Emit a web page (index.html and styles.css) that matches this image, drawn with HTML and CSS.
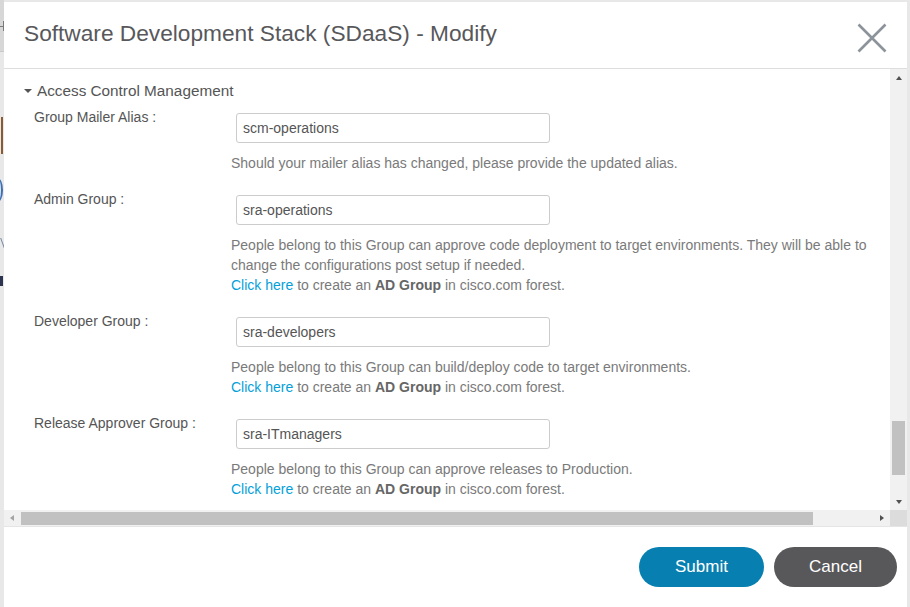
FILE: index.html
```html
<!DOCTYPE html>
<html>
<head>
<meta charset="utf-8">
<title>SDaaS - Modify</title>
<link rel="stylesheet" href="styles.css">
</head>
<body>
<div class="backdrop" aria-hidden="true">
  <div class="bd-top"><div class="bd-plus"></div></div>
  <div class="bd-strip">
    <div class="bd-f"></div>
    <div class="bd-paren"></div>
    <div class="bd-v"></div>
    <div class="bd-i"></div>
  </div>
</div>

<div class="modal">
  <div class="modal-header">
    <h1 class="modal-title">Software Development Stack (SDaaS) - Modify</h1>
    <button class="close" aria-label="Close">
      <svg width="30" height="30" viewBox="0 0 30 30"><path d="M1.5 1.5 L28.5 28.5 M28.5 1.5 L1.5 28.5" stroke="#8c939a" stroke-width="2.6" fill="none"/></svg>
    </button>
  </div>

  <div class="modal-scroll">
    <div class="scroll-main">
      <div class="viewport">
        <div class="section-title"><span class="caret"></span>Access Control Management</div>

        <div class="field-row">
          <label class="field-label">Group Mailer Alias :</label>
          <div class="field-body">
            <input class="field-input" type="text" value="scm-operations">
            <div class="help">Should your mailer alias has changed, please provide the updated alias.</div>
          </div>
        </div>

        <div class="field-row">
          <label class="field-label">Admin Group :</label>
          <div class="field-body">
            <input class="field-input" type="text" value="sra-operations">
            <div class="help">People belong to this Group can approve code deployment to target environments. They will be able to change the configurations post setup if needed.<br><a class="link" href="#">Click here</a> to create an <b>AD Group</b> in cisco.com forest.</div>
          </div>
        </div>

        <div class="field-row">
          <label class="field-label">Developer Group :</label>
          <div class="field-body">
            <input class="field-input" type="text" value="sra-developers">
            <div class="help">People belong to this Group can build/deploy code to target environments.<br><a class="link" href="#">Click here</a> to create an <b>AD Group</b> in cisco.com forest.</div>
          </div>
        </div>

        <div class="field-row">
          <label class="field-label">Release Approver Group :</label>
          <div class="field-body">
            <input class="field-input" type="text" value="sra-ITmanagers">
            <div class="help">People belong to this Group can approve releases to Production.<br><a class="link" href="#">Click here</a> to create an <b>AD Group</b> in cisco.com forest.</div>
          </div>
        </div>
      </div>

      <div class="vscroll">
        <div class="sb-btn"><span class="arr arr-up"></span></div>
        <div class="vtrack"><div class="vthumb"></div></div>
        <div class="sb-btn"><span class="arr arr-down"></span></div>
      </div>
    </div>

    <div class="hscroll-row">
      <div class="hscroll">
        <div class="sb-btn-h"><span class="arr arr-left"></span></div>
        <div class="htrack"><div class="hthumb"></div></div>
        <div class="sb-btn-h"><span class="arr arr-right"></span></div>
      </div>
      <div class="corner"></div>
    </div>
  </div>

  <div class="modal-footer">
    <button class="btn btn-primary">Submit</button>
    <button class="btn btn-secondary">Cancel</button>
  </div>
</div>
</body>
</html>
```

FILE: styles.css
```css
* { box-sizing: border-box; }
html, body { margin: 0; padding: 0; }
body {
  width: 910px;
  height: 607px;
  overflow: hidden;
  position: relative;
  background: #e8e8e8;
  font-family: "Liberation Sans", Arial, sans-serif;
}

/* page behind the dialog (only a 4px sliver shows) */
.backdrop { display: flex; flex-direction: column; width: 4px; overflow: hidden; }
.bd-top {
  height: 52px;
  background: #d7d7d7;
  border-bottom: 1px solid #c9c9c9;
  padding-top: 21px;
}
.bd-plus {
  position: relative;
  width: 4px;
  height: 10px;
  border-right: 1px solid #7a7a7a;
}
.bd-plus::after {
  content: "";
  position: absolute;
  left: 0;
  top: 5px;
  width: 4px;
  height: 1px;
  background: #7a7a7a;
}
.bd-strip { display: flex; flex-direction: column; }
.bd-f { margin: 65px 0 0 1px; width: 2px; height: 37px; background: #8a5a32; }
.bd-paren {
  margin: 24px 0 0 -8px;
  width: 11px;
  height: 24px;
  border-right: 2px solid #3b6fb8;
  border-radius: 50%;
}
.bd-v { margin: 36px 0 0 0; width: 3px; height: 10px; border-right: 1px solid #7386a0; transform: skewX(20deg); }
.bd-i { margin: 28px 0 0 0; width: 3px; height: 10px; background: #2c3550; }

/* dialog */
.modal {
  position: absolute;
  left: 4px;
  top: 2px;
  width: 903px;
  height: 620px;
  background: #fff;
  display: flex;
  flex-direction: column;
}
.modal-header {
  height: 67px;
  flex: none;
  border-bottom: 1px solid #dedede;
  display: flex;
  align-items: flex-start;
  justify-content: space-between;
  padding: 18px 20px 0 20px;
}
.modal-title {
  margin: 0;
  font-size: 22.7px;
  line-height: 26px;
  font-weight: normal;
  color: #58585b;
}
.close {
  margin-top: 3px;
  padding: 0;
  border: 0;
  background: none;
  width: 30px;
  height: 30px;
  display: block;
}
.close svg { display: block; }

.modal-scroll { flex: none; display: flex; flex-direction: column; }
.scroll-main { height: 441px; display: flex; }
.viewport {
  flex: 1;
  overflow: hidden;
  padding: 12px 0 0 20px;
  color: #555;
}
.section-title {
  font-size: 15.3px;
  line-height: 20px;
  color: #555;
  display: flex;
  align-items: center;
  margin-bottom: 6px;
}
.caret {
  width: 0; height: 0;
  border-left: 4px solid transparent;
  border-right: 4px solid transparent;
  border-top: 4.5px solid #555;
  margin-right: 5px;
  margin-top: -1px;
}
.field-row {
  display: grid;
  grid-template-columns: 197px 680px;
  margin-bottom: 16px;
  margin-left: 10px;
}
.field-label {
  font-size: 14px;
  line-height: 20px;
  color: #555;
}
.field-body { display: flex; flex-direction: column; align-items: flex-start; }
.field-input {
  margin: 6px 0 0 5px;
  width: 314px;
  height: 30px;
  border: 1px solid #cccccc;
  border-radius: 3px;
  padding: 0 6px;
  font-family: "Liberation Sans", Arial, sans-serif;
  font-size: 14px;
  color: #555;
  background: #fff;
  outline: none;
}
.help {
  margin-top: 10px;
  width: 660px;
  font-size: 14px;
  line-height: 20px;
  color: #7a7a7a;
}
.help b { color: #666; }
.link { color: #049fd9; text-decoration: none; }

/* fake scrollbars */
.vscroll {
  width: 17px;
  flex: none;
  background: #f1f1f1;
  display: flex;
  flex-direction: column;
}
.sb-btn { height: 17px; display: flex; align-items: center; justify-content: center; flex: none; }
.vtrack { flex: 1; padding: 0 2px; }
.vthumb { margin-top: 335px; height: 54px; background: #c1c1c1; }

.hscroll-row { height: 16px; display: flex; }
.hscroll { flex: 1; background: #f1f1f1; display: flex; }
.sb-btn-h { width: 16px; display: flex; align-items: center; justify-content: center; flex: none; }
.htrack { flex: 1; padding: 2px 0 1px 1px; }
.hthumb { width: 792px; height: 100%; background: #c1c1c1; }
.corner { width: 17px; background: #dcdcdc; }

.arr { width: 0; height: 0; display: block; }
.arr-up { border-left: 3.5px solid transparent; border-right: 3.5px solid transparent; border-bottom: 4px solid #505050; }
.arr-down { border-left: 3.5px solid transparent; border-right: 3.5px solid transparent; border-top: 4px solid #505050; }
.arr-left { border-top: 3.5px solid transparent; border-bottom: 3.5px solid transparent; border-right: 4px solid #a3a3a3; }
.arr-right { border-top: 3.5px solid transparent; border-bottom: 3.5px solid transparent; border-left: 4px solid #505050; }

.modal-footer {
  flex: none;
  border-top: 1px solid #e5e5e5;
  display: flex;
  justify-content: flex-end;
  gap: 10px;
  padding: 20px 10px 0 0;
}
.btn {
  height: 40px;
  border: 0;
  border-radius: 20px;
  color: #fff;
  font-family: "Liberation Sans", Arial, sans-serif;
  font-size: 17px;
  padding: 0;
}
.btn-primary { width: 125px; background: #077fb0; }
.btn-secondary { width: 123px; background: #58585a; }
```
